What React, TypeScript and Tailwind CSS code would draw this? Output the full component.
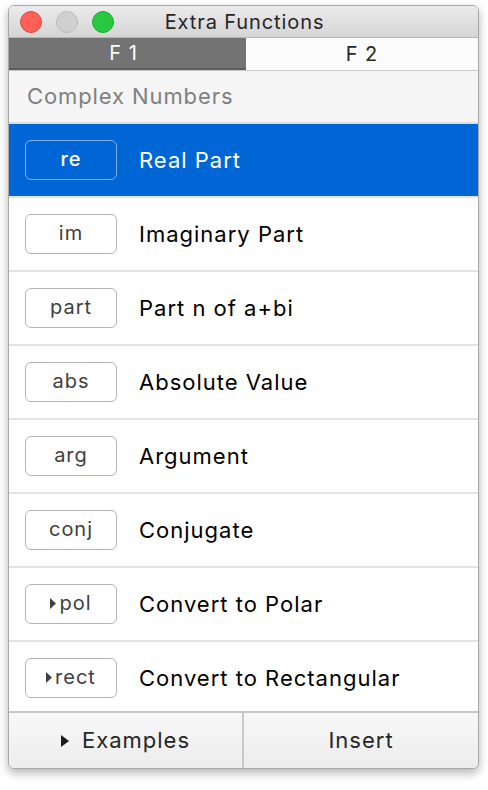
import React from "react";

const rows = [
  { key: "re", label: "Real Part", tri: false },
  { key: "im", label: "Imaginary Part", tri: false },
  { key: "part", label: "Part n of a+bi", tri: false },
  { key: "abs", label: "Absolute Value", tri: false },
  { key: "arg", label: "Argument", tri: false },
  { key: "conj", label: "Conjugate", tri: false },
  { key: "pol", label: "Convert to Polar", tri: true },
  { key: "rect", label: "Convert to Rectangular", tri: true },
];

function Tri({ color }: { color: string }) {
  return (
    <svg width="6" height="11" viewBox="0 0 6 11" className="mr-[3px] mt-[2px]">
      <path d="M0 0 L6 5.5 L0 11 Z" fill={color} />
    </svg>
  );
}

export default function App() {
  return (
    <div
      className="w-[488px] h-[790px] bg-white pt-[5px] pl-[8px]"
      style={{ fontFamily: "Inter, Roboto, 'Liberation Sans', sans-serif" }}
    >
      <div className="w-[471px] h-[764px] rounded-[6px] border border-[#a8a8a8] overflow-hidden flex flex-col shadow-[0_4px_10px_rgba(0,0,0,0.3)] bg-white">
        {/* title bar */}
        <div className="h-[32px] shrink-0 relative flex items-center justify-center bg-gradient-to-b from-[#ebebeb] to-[#d5d5d5] border-b border-[#b5b5b5]">
          <div className="absolute left-[11px] top-[5px] flex gap-[14px]">
            <div className="w-[22px] h-[22px] rounded-full bg-[#fe5f57] border border-[#e2463f]" />
            <div className="w-[22px] h-[22px] rounded-full bg-[#d0d0d0] border border-[#bcbcbc]" />
            <div className="w-[22px] h-[22px] rounded-full bg-[#28c840] border border-[#1aab29]" />
          </div>
          <span className="text-[20px] text-[#262626] tracking-[0.9px] ml-[2px]">Extra Functions</span>
        </div>
        {/* tabs */}
        <div className="h-[33px] shrink-0 flex border-b border-[#c8c8c8]">
          <div className="w-[237px] bg-[#737373] border-b-2 border-[#5c5c5c] flex items-center justify-center text-white text-[20px] tracking-[1px] pr-[8px]">
            F 1
          </div>
          <div className="flex-1 bg-[#fbfbfb] flex items-center justify-center text-[#262626] text-[20px] tracking-[1px]">
            F 2
          </div>
        </div>
        {/* header */}
        <div className="h-[53px] shrink-0 bg-[#f5f5f5] border-b-2 border-[#dedede] flex items-center pl-[18px] text-[22px] tracking-[0.9px] text-[#808080]">
          Complex Numbers
        </div>
        {/* list */}
        <div className="flex-1 overflow-hidden flex flex-col">
          {rows.map((r, i) => {
            const sel = i === 0;
            return (
              <div
                key={r.key}
                className={`h-[74px] shrink-0 flex items-center border-b-2 ${
                  sel ? "bg-[#0066d6] border-[#e3e3e3]" : "bg-white border-[#e3e3e3]"
                }`}
              >
                <div
                  className={`ml-[16px] w-[92px] h-[40px] rounded-[6px] border flex items-center justify-center text-[20px] tracking-[1px] pb-[3px] ${
                    sel ? "border-[#7fb0ea] text-white font-medium" : "border-[#b4b4b4] text-[#404040]"
                  }`}
                >
                  {r.tri && <Tri color={sel ? "#ffffff" : "#404040"} />}
                  {r.key}
                </div>
                <div className={`ml-[22px] text-[22px] tracking-[1px] pt-[1px] ${sel ? "text-white" : "text-black"}`}>{r.label}</div>
              </div>
            );
          })}
        </div>
        {/* footer */}
        <div className="h-[57px] shrink-0 flex border-t-2 border-[#c8c8c8] bg-gradient-to-b from-[#f8f8f8] to-[#ececec]">
          <div className="w-[235px] border-r-2 border-[#c8c8c8] flex items-center justify-center text-[22px] tracking-[1px] text-[#262626]">
            <svg width="8" height="12" viewBox="0 0 8 12" className="mr-[13px]">
              <path d="M0 0 L8 6 L0 12 Z" fill="#1a1a1a" />
            </svg>
            Examples
          </div>
          <div className="flex-1 flex items-center justify-center text-[22px] tracking-[1px] text-[#262626]">Insert</div>
        </div>
      </div>
    </div>
  );
}
